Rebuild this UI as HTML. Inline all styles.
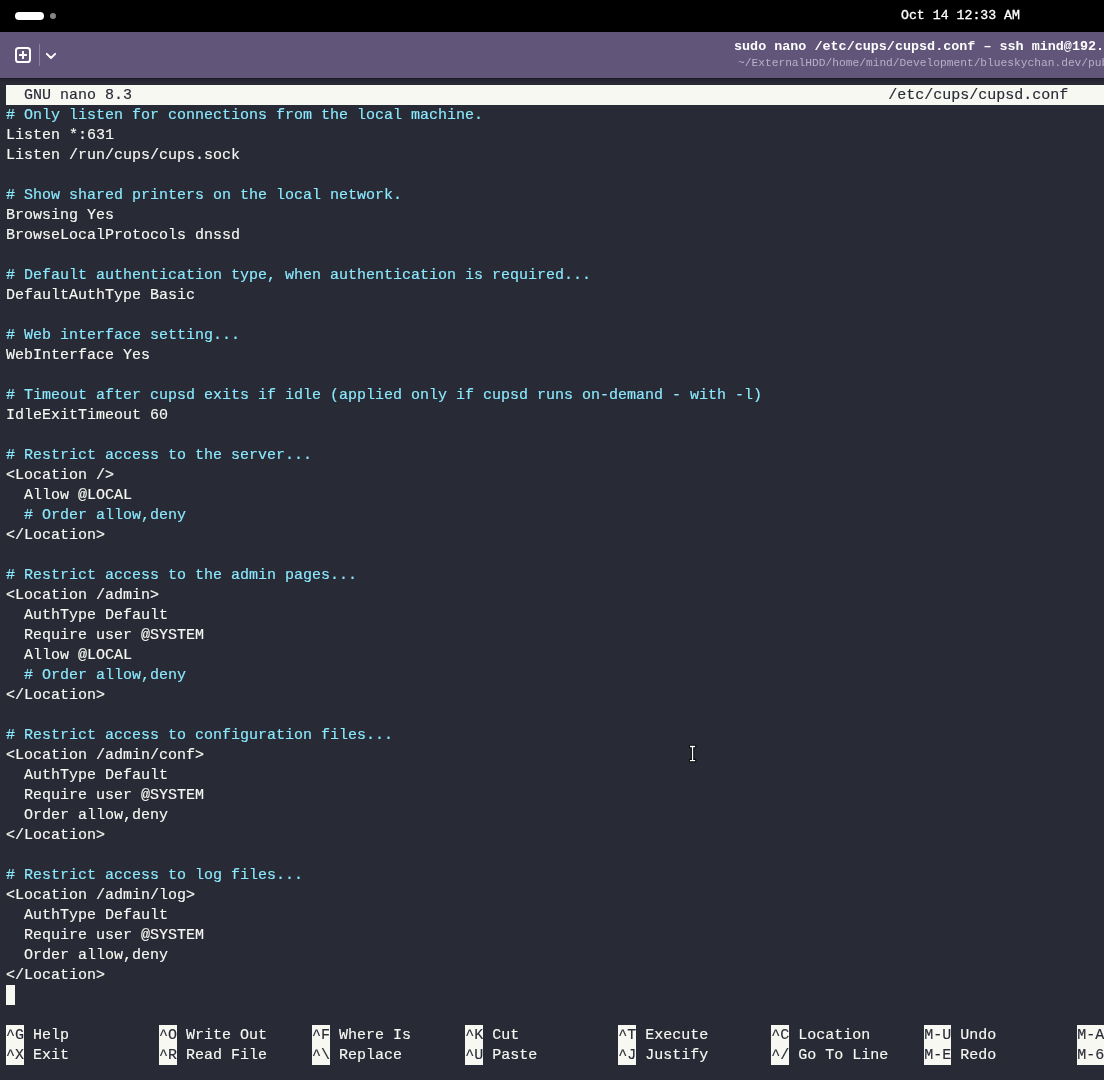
<!DOCTYPE html>
<html>
<head>
<meta charset="utf-8">
<title>nano</title>
<style>
html,body{margin:0;padding:0;}
body{width:1104px;height:1080px;overflow:hidden;background:#282a36;position:relative;font-family:"Liberation Mono",monospace;}
#top{position:absolute;left:0;top:0;width:1104px;height:32px;background:#000;}
#pill{position:absolute;left:15px;top:12px;width:29px;height:8px;border-radius:4px;background:#fff;}
#dot{position:absolute;left:50px;top:13px;width:6px;height:6px;border-radius:3px;background:#848484;}
#clock{position:absolute;left:901px;top:7.9px;font-size:13.22px;line-height:16px;color:#fff;white-space:pre;will-change:transform;-webkit-text-stroke:0.3px;}
#hdr{position:absolute;left:0;top:32px;width:1104px;height:46px;background:#61567a;}
#hdrline{position:absolute;left:0;top:78px;width:1104px;height:5px;background:linear-gradient(to bottom,#1a1b24 0,#1a1b24 1px,#22232e 1px,#282a36 5px);}
#sep{position:absolute;left:39px;top:44px;width:1px;height:22px;background:#8b809d;}
#title{position:absolute;left:734.2px;top:39px;will-change:transform;font-size:13.42px;line-height:16px;font-weight:bold;color:#fff;white-space:pre;}
#sub{position:absolute;left:737.5px;top:56px;will-change:transform;font-size:11.22px;line-height:14px;color:#b9b0c6;white-space:pre;}
#term{position:absolute;left:6px;top:86px;will-change:transform;-webkit-text-stroke:0.15px;font-size:15px;line-height:20px;color:#f8f8f2;white-space:pre;}
#term div{height:20px;}
.c{color:#8be9fd;}
.i{color:#282a36;}
.k{position:absolute;background:#f8f8f2;height:20px;width:18px;}
.k3{width:27px;}
#tb{position:absolute;left:6px;top:85px;width:1098px;height:20px;background:#f8f8f2;}
#cur{position:absolute;left:6px;top:985px;width:9px;height:20px;background:#f8f8f2;}
svg{position:absolute;}
</style>
</head>
<body>
<div id="top"><div id="pill"></div><div id="dot"></div><div id="clock">Oct 14 12:33 AM</div></div>
<div id="hdr"></div><div id="hdrline"></div>
<svg style="left:15px;top:47px" width="16" height="16" viewBox="0 0 16 16"><rect x="1" y="1" width="14" height="14" rx="2.6" fill="none" stroke="#fff" stroke-width="2"/><path d="M8 4.1v7.8M4.1 8h7.8" stroke="#fff" stroke-width="2" fill="none"/></svg>
<div id="sep"></div>
<svg style="left:45px;top:52px" width="12" height="8" viewBox="0 0 12 8"><path d="M1.8 1.8L6 6l4.2-4.2" stroke="#fff" stroke-width="1.9" fill="none" stroke-linecap="round" stroke-linejoin="round"/></svg>
<div id="title">sudo nano /etc/cups/cupsd.conf – ssh mind@192.168</div>
<div id="sub">~/ExternalHDD/home/mind/Development/blueskychan.dev/public</div>
<div id="tb"></div>
<div id="cur"></div>
<div class="k" style="left:6px;top:1025px"></div><div class="k" style="left:159px;top:1025px"></div><div class="k" style="left:312px;top:1025px"></div><div class="k" style="left:465px;top:1025px"></div><div class="k" style="left:618px;top:1025px"></div><div class="k" style="left:771px;top:1025px"></div><div class="k k3" style="left:924px;top:1025px"></div><div class="k k3" style="left:1077px;top:1025px"></div><div class="k" style="left:6px;top:1045px"></div><div class="k" style="left:159px;top:1045px"></div><div class="k" style="left:312px;top:1045px"></div><div class="k" style="left:465px;top:1045px"></div><div class="k" style="left:618px;top:1045px"></div><div class="k" style="left:771px;top:1045px"></div><div class="k k3" style="left:924px;top:1045px"></div><div class="k k3" style="left:1077px;top:1045px"></div>
<div id="term"><div style="color:#282a36">  GNU nano 8.3                                                                                    /etc/cups/cupsd.conf</div><div class="c"># Only listen for connections from the local machine.</div><div>Listen *:631</div><div>Listen /run/cups/cups.sock</div><div></div><div class="c"># Show shared printers on the local network.</div><div>Browsing Yes</div><div>BrowseLocalProtocols dnssd</div><div></div><div class="c"># Default authentication type, when authentication is required...</div><div>DefaultAuthType Basic</div><div></div><div class="c"># Web interface setting...</div><div>WebInterface Yes</div><div></div><div class="c"># Timeout after cupsd exits if idle (applied only if cupsd runs on-demand - with -l)</div><div>IdleExitTimeout 60</div><div></div><div class="c"># Restrict access to the server...</div><div>&lt;Location /&gt;</div><div>  Allow @LOCAL</div><div class="c">  # Order allow,deny</div><div>&lt;/Location&gt;</div><div></div><div class="c"># Restrict access to the admin pages...</div><div>&lt;Location /admin&gt;</div><div>  AuthType Default</div><div>  Require user @SYSTEM</div><div>  Allow @LOCAL</div><div class="c">  # Order allow,deny</div><div>&lt;/Location&gt;</div><div></div><div class="c"># Restrict access to configuration files...</div><div>&lt;Location /admin/conf&gt;</div><div>  AuthType Default</div><div>  Require user @SYSTEM</div><div>  Order allow,deny</div><div>&lt;/Location&gt;</div><div></div><div class="c"># Restrict access to log files...</div><div>&lt;Location /admin/log&gt;</div><div>  AuthType Default</div><div>  Require user @SYSTEM</div><div>  Order allow,deny</div><div>&lt;/Location&gt;</div><div></div><div></div><div><span class="i">^G</span> Help          <span class="i">^O</span> Write Out     <span class="i">^F</span> Where Is      <span class="i">^K</span> Cut           <span class="i">^T</span> Execute       <span class="i">^C</span> Location      <span class="i">M-U</span> Undo         <span class="i">M-A</span> Set Mark</div><div><span class="i">^X</span> Exit          <span class="i">^R</span> Read File     <span class="i">^\</span> Replace       <span class="i">^U</span> Paste         <span class="i">^J</span> Justify       <span class="i">^/</span> Go To Line    <span class="i">M-E</span> Redo         <span class="i">M-6</span> Copy</div></div>
<svg style="left:688px;top:744px" width="10" height="20" viewBox="0 0 10 20"><path d="M2.4 2.5H6.8M2.4 16.6H6.8M4.55 2.5V16.6" stroke="#000" stroke-width="3.3" fill="none" stroke-linecap="round" stroke-linejoin="round"/><path d="M1.9 2.5H7.2M1.9 16.6H7.2M4.55 2.5V16.6" stroke="#fff" stroke-width="1.3" fill="none"/></svg>
</body>
</html>
